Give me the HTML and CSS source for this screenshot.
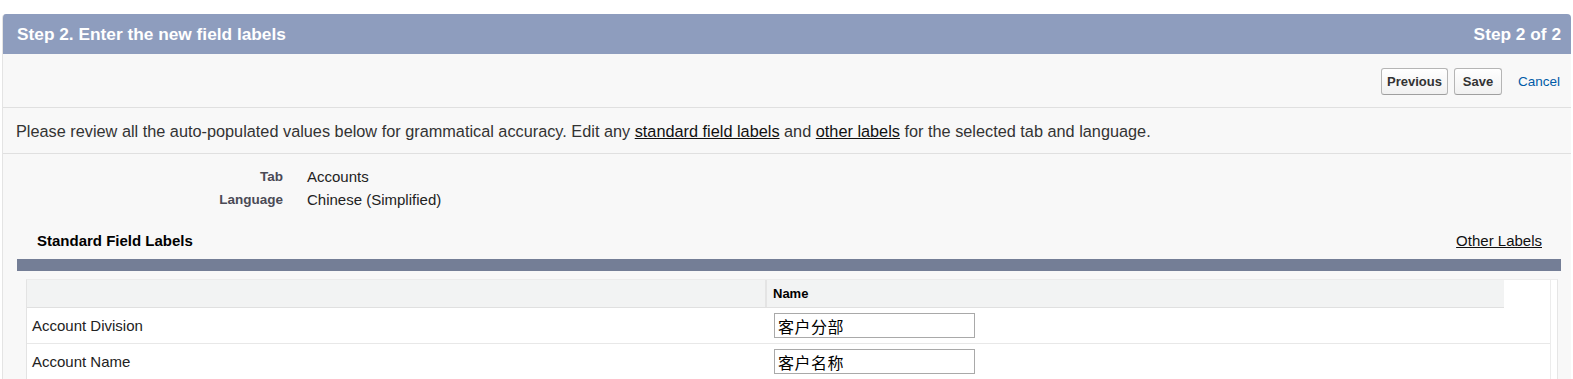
FILE: index.html
```html
<!DOCTYPE html>
<html lang="en">
<head>
<meta charset="utf-8">
<title>Step 2. Enter the new field labels</title>
<link rel="stylesheet" href="styles.css">
</head>
<body>
<div class="box">
  <div class="hdr">
    <span class="hdr-title">Step 2. Enter the new field labels</span>
    <span class="hdr-step">Step 2 of 2</span>
  </div>
  <div class="btns">
    <button class="btn">Previous</button>
    <button class="btn btn-save">Save</button>
    <a class="cancel" href="#">Cancel</a>
  </div>
  <div class="desc">Please review all the auto-populated values below for grammatical accuracy. Edit any <a href="#" class="ulink">standard field labels</a> and <a href="#" class="ulink">other labels</a> for the selected tab and language.</div>
  <div class="info">
    <div class="info-row"><span class="info-label">Tab</span><span class="info-value">Accounts</span></div>
    <div class="info-row"><span class="info-label">Language</span><span class="info-value">Chinese (Simplified)</span></div>
  </div>
  <div class="sec">
    <span class="sec-title">Standard Field Labels</span>
    <a href="#" class="ulink sec-link">Other Labels</a>
  </div>
  <div class="bar"></div>
  <div class="tablewrap">
    <div class="tbl">
      <div class="thead">
        <div class="th th-first"></div>
        <div class="th">Name</div>
      </div>
      <div class="tr">
        <div class="td">Account Division</div>
        <div class="td td-input"><input class="field" type="text" value="客户分部"></div>
      </div>
      <div class="tr">
        <div class="td">Account Name</div>
        <div class="td td-input"><input class="field" type="text" value="客户名称"></div>
      </div>
    </div>
  </div>
</div>
</body>
</html>
```
FILE: styles.css
```css
html, body {
  margin: 0;
  padding: 0;
  background: #ffffff;
  font-family: "Liberation Sans", Arial, sans-serif;
  color: #222;
}

.box {
  margin: 14px 2px 0 2px;
  background: #f8f8f8;
  border-left: 1px solid #e4e4e4;
  border-radius: 4px 4px 0 0;
  overflow: hidden;
  height: 365px;
}

.hdr {
  height: 40px;
  background: #8e9dbe;
  color: #fff;
  font-weight: bold;
  font-size: 17.3px;
  display: flex;
  align-items: center;
  justify-content: space-between;
  padding: 0 10px 0 14px;
}

.btns {
  height: 53px;
  border-bottom: 1px solid #e0e0e0;
  display: flex;
  align-items: center;
  justify-content: flex-end;
  padding-right: 11px;
}

.btn {
  height: 27px;
  padding: 0 5px;
  margin-left: 6px;
  margin-top: 2px;
  font-family: "Liberation Sans", Arial, sans-serif;
  font-size: 13px;
  font-weight: bold;
  color: #333;
  background: linear-gradient(#ffffff, #f1f1f1);
  border: 1px solid #b5b5b5;
  border-bottom-color: #9f9f9f;
  border-radius: 3px;
}

.btn-save {
  min-width: 48px;
}

.cancel {
  margin-left: 16px;
  margin-top: 2px;
  font-size: 13.5px;
  color: #015ba7;
  text-decoration: none;
}

.desc {
  height: 45px;
  line-height: 46px;
  border-bottom: 1px solid #e0e0e0;
  padding-left: 13px;
  font-size: 16.3px;
  color: #333;
  white-space: nowrap;
}

.ulink {
  color: #111;
  text-decoration: underline;
}

.info {
  padding-top: 11px;
}

.info-row {
  display: flex;
  height: 23px;
  align-items: center;
}

.info-label {
  width: 280px;
  text-align: right;
  font-weight: bold;
  font-size: 13.5px;
  color: #4a4a56;
}

.info-value {
  margin-left: 24px;
  font-size: 15px;
  color: #222;
}

.sec {
  display: flex;
  justify-content: space-between;
  align-items: center;
  padding: 18px 29px 8px 34px;
  height: 22px;
}

.sec-title {
  font-weight: bold;
  font-size: 15px;
  color: #000;
}

.sec-link {
  font-size: 15px;
}

.bar {
  height: 12px;
  background: #747e96;
  margin: 0 10px 0 14px;
}

.tablewrap {
  margin: 8px 0 0 23px;
  width: 1530px;
  background: #fff;
  border-left: 1px solid #e3e3e3;
  border-right: 1px solid #e6e6e6;
  border-top: 1px solid #ececec;
  height: 120px;
}

.tbl {
  width: 1523px;
  border-right: 1px solid #ececec;
  height: 100%;
}

.thead {
  width: 1477px;
  display: grid;
  grid-template-columns: 740px 1fr;
  height: 27px;
  background: #f2f3f3;
  border-bottom: 1px solid #e0e0e0;
}

.th {
  display: flex;
  align-items: center;
  padding-left: 6px;
  font-size: 13px;
  font-weight: bold;
  color: #000;
}

.th-first {
  border-right: 2px solid #e4e4e4;
}

.tr {
  display: grid;
  grid-template-columns: 740px 1fr;
  height: 35px;
  border-bottom: 1px solid #e8e8e8;
}

.td {
  display: flex;
  align-items: center;
  padding-left: 5px;
  font-size: 15px;
  color: #222;
}

.td-input {
  padding-left: 7px;
}

.field {
  width: 201px;
  height: 25px;
  box-sizing: border-box;
  border: 1px solid #a9a9a9;
  padding: 0 3px;
  font-family: "Noto Sans CJK SC", sans-serif;
  font-size: 16px;
  color: #000;
  background: #fff;
  letter-spacing: 0.5px;
}
```
